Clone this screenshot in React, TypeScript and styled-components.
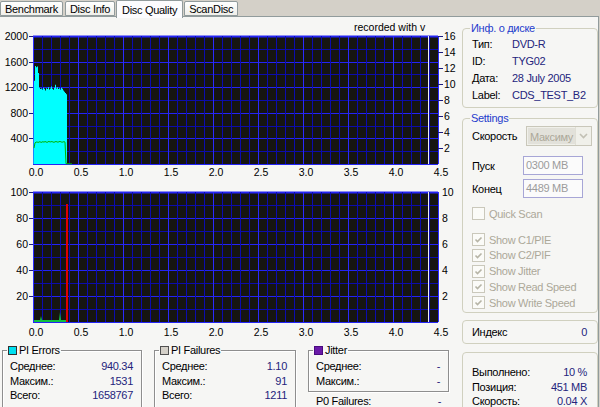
import React from "react";
import styled, { createGlobalStyle } from "styled-components";

const GlobalStyle = createGlobalStyle`
  body {
    margin: 0;
    padding: 0;
    background: #d4d0c8;
    font-family: "Liberation Sans", Arial, sans-serif;
    font-size: 11px;
    letter-spacing: -0.3px;
    color: #000;
  }
`;

const Window = styled.div`
  width: 600px;
  height: 407px;
  overflow: hidden;
  display: flex;
  flex-direction: column;
  background: #d4d0c8;
`;

const TabStrip = styled.div`
  height: 16px;
  flex-shrink: 0;
  display: flex;
  align-items: flex-end;
  gap: 2px;
  position: relative;
  z-index: 1;
`;

const Tab = styled.div<{ $active?: boolean }>`
  box-sizing: border-box;
  height: ${(p) => (p.$active ? 18 : 15)}px;
  margin: 0 ${(p) => (p.$active ? -1 : 0)}px ${(p) => (p.$active ? -2 : 0)}px;
  padding: 0 ${(p) => (p.$active ? 5 : 4)}px;
  display: flex;
  align-items: center;
  background: ${(p) => (p.$active ? "#fcfcfe" : "linear-gradient(#ffffff, #f0efea)")};
  border: 1px solid #919b9c;
  border-bottom: ${(p) => (p.$active ? "none" : "1px solid #919b9c")};
  border-radius: 2px 2px 0 0;
  white-space: nowrap;
`;

const Body = styled.div`
  flex: 1;
  display: flex;
  min-height: 0;
  margin-right: 1px;
  background: #f6f6f4;
  border-top: 1px solid #919b9c;
  border-right: 1px solid #919b9c;
`;

const LeftColumn = styled.div`
  width: 458px;
  flex-shrink: 0;
  display: flex;
  flex-direction: column;
`;

const ChartSvg = styled.svg`
  display: block;
  flex-shrink: 0;
  text {
    font-family: "Liberation Sans", Arial, sans-serif;
    font-size: 10.5px;
    letter-spacing: 0;
    fill: #000;
  }
`;

const StatsRow = styled.div`
  display: flex;
  align-items: flex-start;
  gap: 12px;
  padding: 4px 0 0 2px;
`;

const StatColumn = styled.div`
  display: flex;
  flex-direction: column;
`;

const StatBox = styled.fieldset<{ $w: number; $h: number }>`
  box-sizing: border-box;
  margin: 0;
  min-width: 0;
  width: ${(p) => p.$w}px;
  height: ${(p) => p.$h}px;
  padding: 3px 8px 0 7px;
  border: 1px solid #8e8e8e;
  box-shadow: inset 1px 1px 0 #fff, 1px 1px 0 #fff;
`;

const StatLegend = styled.legend`
  display: flex;
  align-items: center;
  gap: 2px;
  padding: 0 1px;
  margin-left: -3px;
  line-height: 12px;
`;

const Swatch = styled.span<{ $color: string; $border?: string }>`
  width: 7px;
  height: 7px;
  background: ${(p) => p.$color};
  border: 1px solid ${(p) => p.$border ?? "#303030"};
`;

const StatRow = styled.div<{ $pad?: number }>`
  display: flex;
  justify-content: space-between;
  line-height: 14.5px;
  padding: 0 ${(p) => p.$pad ?? 0}px;
`;

const Value = styled.span`
  color: #24247c;
`;

const RightColumn = styled.div`
  flex: 1;
  display: flex;
  flex-direction: column;
  padding: 5px 0 0 4px;
  min-width: 0;
`;

const Group = styled.fieldset<{ $h: number; $mt?: number }>`
  box-sizing: border-box;
  margin: ${(p) => p.$mt ?? 0}px 0 0;
  min-width: 0;
  height: ${(p) => p.$h}px;
  flex-shrink: 0;
  padding: 2px 4px 0 9px;
  border: 1px solid #d0d0bf;
  border-radius: 4px;
`;

const GroupTitle = styled.legend`
  color: #1f3ccc;
  padding: 0 1px;
  margin-left: -2px;
  line-height: 12px;
`;

const InfoRow = styled.div`
  display: grid;
  grid-template-columns: 40px 1fr;
  line-height: 17px;
  white-space: nowrap;
`;

const FieldRow = styled.div<{ $mt?: number; $h: number }>`
  display: flex;
  align-items: center;
  justify-content: space-between;
  height: ${(p) => p.$h}px;
  margin-top: ${(p) => p.$mt ?? 0}px;
`;

const Combo = styled.div`
  box-sizing: border-box;
  width: 66px;
  height: 20px;
  margin-right: 1px;
  display: flex;
  align-items: stretch;
  border: 1px solid #c9c7ba;
  background: #f0f0ea;
  color: #aca899;
`;

const ComboText = styled.span`
  flex: 1;
  overflow: hidden;
  white-space: nowrap;
  padding: 2px 0 0 2px;
  line-height: 14px;
  background: #e2e1da;
  margin: 1px 0 1px 1px;
`;

const ComboButton = styled.span`
  width: 15px;
  display: flex;
  align-items: center;
  justify-content: center;
  border-left: 1px solid #e0dfd6;
`;

const TextInput = styled.div`
  box-sizing: border-box;
  width: 60px;
  height: 19px;
  margin-right: 10px;
  padding: 2px 0 0 2px;
  border: 1px solid #a7a6d6;
  background: #fbfbfb;
  color: #9c9c9c;
  line-height: 13px;
`;

const CheckRow = styled.div<{ $mt?: number }>`
  display: flex;
  align-items: center;
  gap: 4px;
  height: 15.75px;
  margin-top: ${(p) => p.$mt ?? 0}px;
  color: #aca899;
  white-space: nowrap;
`;

const CheckBox = styled.span`
  box-sizing: border-box;
  width: 13px;
  height: 13px;
  border: 1px solid #cac8bb;
  background: #fbfbf8;
  display: flex;
  align-items: center;
  justify-content: center;
`;

const Box = styled.div<{ $h: number; $mt: number; $pt?: number }>`
  box-sizing: border-box;
  flex-shrink: 0;
  height: ${(p) => p.$h}px;
  margin-top: ${(p) => p.$mt}px;
  padding: ${(p) => p.$pt ?? 0}px 10px 0 9px;
  border: 1px solid #d0d0bf;
  border-radius: 4px;
  display: flex;
  flex-direction: column;
  justify-content: ${(p) => (p.$pt ? "flex-start" : "center")};
`;

const BoxRow = styled.div`
  display: flex;
  justify-content: space-between;
  line-height: 14.5px;
  white-space: nowrap;
`;

/* chart geometry */
const PX = 33;
const PW = 405;
const STEP = 9;

type ChartProps = {
  height: number;
  top: number;
  plotH: number;
  left: string[];
  right: number[];
  rightMax: number;
  ticks?: boolean;
  caption?: string;
  labelY: number;
  children?: React.ReactNode;
};

function Chart({ height, top, plotH, left, right, rightMax, ticks, caption, labelY, children }: ChartProps) {
  const bottom = top + plotH;
  const v: React.ReactNode[] = [];
  for (let k = 0; k <= 45; k++) {
    const x = PX + k * STEP + 0.5;
    v.push(
      <line key={"v" + k} x1={x} x2={x} y1={top} y2={bottom} stroke={k % 5 === 0 ? "#2a2aff" : "#0b0bb0"} />
    );
  }
  const h: React.ReactNode[] = [];
  for (let i = 0; i <= 10; i++) {
    const y = Math.round(top + (i * plotH) / 10) + 0.5;
    h.push(
      <line key={"h" + i} x1={PX} x2={PX + PW} y1={y} y2={y} stroke={i % 2 === 0 ? "#2424f4" : "#0c0caa"} strokeWidth={i === 0 ? 2 : 1} />
    );
  }
  const xs = ["0.0", "0.5", "1.0", "1.5", "2.0", "2.5", "3.0", "3.5", "4.0", "4.5"];
  return (
    <ChartSvg width={458} height={height}>
      <rect x={PX} y={top} width={PW} height={plotH} fill="#161511" />
      {h}
      {v}
      {children}
      <line x1={428.5} x2={428.5} y1={top} y2={bottom} stroke="#efefef" />
      {left.map((t, i) => {
        const y = Math.round(top + (i * 2 * plotH) / 10);
        return (
          <g key={t}>
            <line x1={29} x2={PX} y1={y + 0.5} y2={y + 0.5} stroke="#1a1a80" />
            <text x={28} y={y + 4} textAnchor="end">{t}</text>
          </g>
        );
      })}
      {right.map((r) => {
        const y = Math.round(top + (1 - r / rightMax) * plotH);
        return (
          <g key={r}>
            {ticks && <line x1={PX + PW} x2={PX + PW + 5} y1={y + 0.5} y2={y + 0.5} stroke="#1a1a80" />}
            <text x={ticks ? 444 : 442} y={y + 4}>{r}</text>
          </g>
        );
      })}
      {xs.map((t, i) => (
        <text key={t} x={PX + i * 45 + 3} y={labelY} textAnchor="middle">{t}</text>
      ))}
      {caption && <text x={354} y={14}>{caption}</text>}
    </ChartSvg>
  );
}

const cyan = [1300, 1530, 1510, 1525, 1420, 1190, 1170, 1180, 1160, 1190, 1175, 1150, 1185, 1170, 1200, 1165, 1180, 1210, 1175, 1160, 1190, 1240, 1180, 1200, 1170, 1185, 1160, 1190, 1175, 1150, 1130, 1110, 1090];
const green = [250, 330, 340, 345, 338, 342, 350, 336, 344, 348, 340, 352, 345, 338, 346, 355, 342, 348, 350, 344, 339, 347, 352, 345, 341, 349, 353, 346, 340, 344, 350, 342];

function TopData({ top, plotH }: { top: number; plotH: number }) {
  const base = top + plotH;
  const k = plotH / 2000;
  const pts = [`33.5,${base}`];
  cyan.forEach((val, i) => {
    const x = 34 + i;
    pts.push(`${x},${base - val * k}`, `${x + 1},${base - val * k}`);
  });
  pts.push(`67,${base}`);
  const g = green.map((val, i) => `${34 + i},${(base - val * k).toFixed(1)}`);
  g.push(`66,${base - 5 * k}`, `72,${base - 3 * k}`);
  return (
    <>
      <polygon points={pts.join(" ")} fill="#00ffff" />
      <polyline points={g.join(" ")} fill="none" stroke="#00b400" />
    </>
  );
}

function BottomData({ top, plotH }: { top: number; plotH: number }) {
  const base = top + plotH;
  return (
    <>
      <polygon
        points={`34,${base} 34,${base - 2} 40,${base - 2} 41,${base - 6} 42,${base - 2} 59,${base - 2} 60,${base - 10} 61,${base - 2} 66,${base - 2} 66,${base}`}
        fill="#10c040"
      />
      <rect x={66} y={top + 12} width={2} height={plotH - 12} fill="#e00000" />
    </>
  );
}

function Check({ checked, label, mt }: { checked?: boolean; label: string; mt?: number }) {
  return (
    <CheckRow $mt={mt}>
      <CheckBox>
        {checked && (
          <svg width="9" height="9" viewBox="0 0 9 9">
            <polyline points="1.5,4.5 3.5,6.5 7.5,2.5" fill="none" stroke="#b6b4a6" strokeWidth="1.6" />
          </svg>
        )}
      </CheckBox>
      {label}
    </CheckRow>
  );
}

export default function App() {
  return (
    <>
      <GlobalStyle />
      <Window>
        <TabStrip>
          <Tab>Benchmark</Tab>
          <Tab>Disc Info</Tab>
          <Tab $active>Disc Quality</Tab>
          <Tab>ScanDisc</Tab>
        </TabStrip>
        <Body>
          <LeftColumn>
            <Chart
              height={162}
              top={19}
              plotH={128}
              left={["2000", "1600", "1200", "800", "400"]}
              right={[16, 14, 12, 10, 8, 6, 4, 2]}
              rightMax={16}
              ticks
              caption="recorded with  v"
              labelY={158.5}
            >
              <TopData top={19} plotH={128} />
            </Chart>
            <Chart
              height={161}
              top={13}
              plotH={130}
              left={["100", "80", "60", "40", "20"]}
              right={[10, 8, 6, 4, 2]}
              rightMax={10}
              labelY={156.5}
            >
              <BottomData top={13} plotH={130} />
            </Chart>
            <StatsRow>
              <StatBox $w={140} $h={66}>
                <StatLegend>
                  <Swatch $color="#00e0f0" />
                  PI Errors
                </StatLegend>
                <StatRow><span>Среднее:</span><Value>940.34</Value></StatRow>
                <StatRow><span>Максим.:</span><Value>1531</Value></StatRow>
                <StatRow><span>Всего:</span><Value>1658767</Value></StatRow>
              </StatBox>
              <StatBox $w={142} $h={66}>
                <StatLegend>
                  <Swatch $color="#d4d0c8" $border="#505050" />
                  PI Failures
                </StatLegend>
                <StatRow><span>Среднее:</span><Value>1.10</Value></StatRow>
                <StatRow><span>Максим.:</span><Value>91</Value></StatRow>
                <StatRow><span>Всего:</span><Value>1211</Value></StatRow>
              </StatBox>
              <StatColumn>
                <StatBox $w={141} $h={48}>
                  <StatLegend>
                    <Swatch $color="#6a1aa8" $border="#4a0a80" />
                    Jitter
                  </StatLegend>
                  <StatRow><span>Среднее:</span><Value>-</Value></StatRow>
                  <StatRow><span>Максим.:</span><Value>-</Value></StatRow>
                </StatBox>
                <StatRow $pad={8} style={{ marginTop: 2 }}>
                  <span>P0 Failures:</span>
                  <Value>-</Value>
                </StatRow>
              </StatColumn>
            </StatsRow>
          </LeftColumn>
          <RightColumn>
            <Group $h={86}>
              <GroupTitle>Инф. о диске</GroupTitle>
              <InfoRow><span>Тип:</span><Value>DVD-R</Value></InfoRow>
              <InfoRow><span>ID:</span><Value>TYG02</Value></InfoRow>
              <InfoRow><span>Дата:</span><Value>28 July 2005</Value></InfoRow>
              <InfoRow><span>Label:</span><Value>CDS_TEST_B2</Value></InfoRow>
            </Group>
            <Group $h={201} $mt={4}>
              <GroupTitle>Settings</GroupTitle>
              <FieldRow $h={20}>
                <span>Скорость</span>
                <Combo>
                  <ComboText>Максиму</ComboText>
                  <ComboButton>
                    <svg width="9" height="6" viewBox="0 0 9 6">
                      <polyline points="1,1 4.5,4.5 8,1" fill="none" stroke="#c2c0b4" strokeWidth="1.6" />
                    </svg>
                  </ComboButton>
                </Combo>
              </FieldRow>
              <FieldRow $h={19} $mt={10}>
                <span>Пуск</span>
                <TextInput>0300 MB</TextInput>
              </FieldRow>
              <FieldRow $h={19} $mt={4}>
                <span>Конец</span>
                <TextInput>4489 MB</TextInput>
              </FieldRow>
              <Check label="Quick Scan" mt={8} />
              <Check checked label="Show C1/PIE" mt={10} />
              <Check checked label="Show C2/PIF" />
              <Check checked label="Show Jitter" />
              <Check checked label="Show Read Speed" />
              <Check checked label="Show Write Speed" />
            </Group>
            <Box $h={24} $mt={7}>
              <BoxRow><span>Индекс</span><Value>0</Value></BoxRow>
            </Box>
            <Box $h={60} $mt={8} $pt={12}>
              <BoxRow><span>Выполнено:</span><Value>10 %</Value></BoxRow>
              <BoxRow><span>Позиция:</span><Value>451 MB</Value></BoxRow>
              <BoxRow><span>Скорость:</span><Value>0.04 X</Value></BoxRow>
            </Box>
          </RightColumn>
        </Body>
      </Window>
    </>
  );
}
